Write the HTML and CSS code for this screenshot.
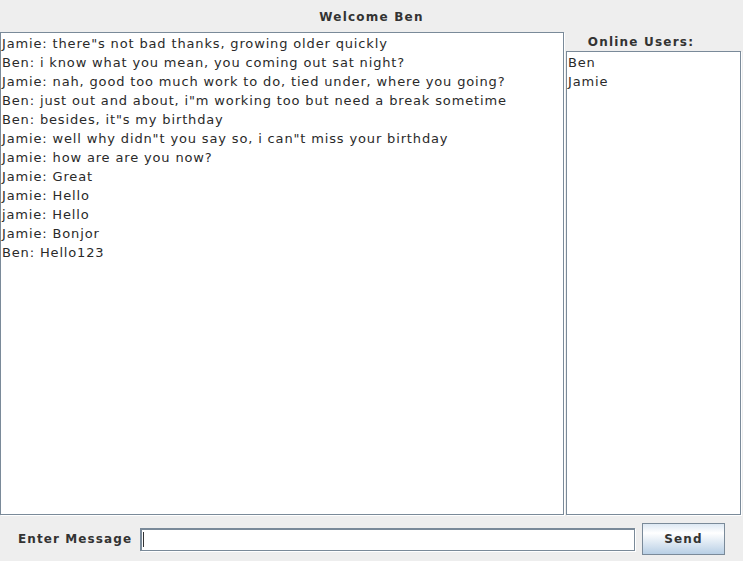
FILE: index.html
```html
<!DOCTYPE html>
<html>
<head>
<meta charset="utf-8">
<link rel="stylesheet" href="styles.css">
</head>
<body>
<div class="window">
  <div class="title">Welcome Ben</div>
  <div class="main">
    <div class="chat">
      <div class="line">Jamie: there"s not bad thanks, growing older quickly</div>
      <div class="line">Ben: i know what you mean, you coming out sat night?</div>
      <div class="line">Jamie: nah, good too much work to do, tied under, where you going?</div>
      <div class="line">Ben: just out and about, i"m working too but need a break sometime</div>
      <div class="line">Ben: besides, it"s my birthday</div>
      <div class="line">Jamie: well why didn"t you say so, i can"t miss your birthday</div>
      <div class="line">Jamie: how are are you now?</div>
      <div class="line">Jamie: Great</div>
      <div class="line">Jamie: Hello</div>
      <div class="line">jamie: Hello</div>
      <div class="line">Jamie: Bonjor</div>
      <div class="line">Ben: Hello123</div>
    </div>
    <div class="side">
      <div class="side-label">Online Users:</div>
      <div class="users">
        <div class="line">Ben</div>
        <div class="line">Jamie</div>
      </div>
    </div>
  </div>
  <div class="bottom">
    <div class="msg-label">Enter Message</div>
    <div class="field"><span class="caret"></span></div>
    <div class="send">Send</div>
  </div>
</div>
</body>
</html>
```
FILE: styles.css
```css
html, body {
  margin: 0;
  padding: 0;
  background: #eeeeee;
}
.window {
  width: 743px;
  height: 561px;
  display: flex;
  flex-direction: column;
  font-family: "DejaVu Sans", "Liberation Sans", sans-serif;
  color: #333333;
}
.title {
  height: 32px;
  display: flex;
  align-items: center;
  justify-content: center;
  font-weight: bold;
  font-size: 12px;
  letter-spacing: 1.2px;
  padding-top: 1px;
  box-sizing: border-box;
}
.main {
  height: 483px;
  display: flex;
}
.chat {
  border: 1px solid #7a8a99;
  box-shadow: 1px 1px 0 #ffffff;
  background: #ffffff;
  padding: 1px 0 0 1px;
  box-sizing: border-box;
  width: 564px;
  height: 483px;
}
.line {
  font-size: 13px;
  line-height: 19px;
  color: #2a2a2a;
  white-space: nowrap;
  letter-spacing: 0.85px;
}
.side {
  width: 176px;
  margin-left: 2px;
  display: flex;
  flex-direction: column;
}
.side-label {
  height: 19px;
  display: flex;
  align-items: center;
  justify-content: center;
  font-weight: bold;
  font-size: 12px;
  letter-spacing: 1.2px;
  box-sizing: border-box;
  padding-right: 26px;
}
.users {
  flex: 1;
  border: 1px solid #7a8a99;
  box-shadow: 1px 1px 0 #ffffff;
  background: #ffffff;
  padding: 1px 0 0 1px;
  box-sizing: border-box;
  width: 175px;
}
.bottom {
  flex: 1;
  display: flex;
  align-items: center;
  padding-left: 18px;
  padding-top: 2px;
}
.msg-label {
  font-weight: bold;
  font-size: 12px;
  letter-spacing: 1.1px;
  width: 122px;
}
.field {
  width: 495px;
  height: 23px;
  box-sizing: border-box;
  border: 1px solid #7a8a99;
  border-top-width: 2px;
  border-left-width: 2px;
  box-shadow: 1px 1px 0 #ffffff;
  background: #ffffff;
  display: flex;
  align-items: center;
  padding-left: 1px;
}
.caret {
  width: 1px;
  height: 15px;
  background: #333333;
}
.send {
  margin-left: 7px;
  width: 83px;
  height: 32px;
  box-sizing: border-box;
  border: 1px solid #7a8a99;
  background: linear-gradient(to bottom, #dde8f3 0%, #ffffff 30%, #b8cfe5 100%);
  display: flex;
  align-items: center;
  justify-content: center;
  font-weight: bold;
  font-size: 12px;
  letter-spacing: 1.2px;
}
```
